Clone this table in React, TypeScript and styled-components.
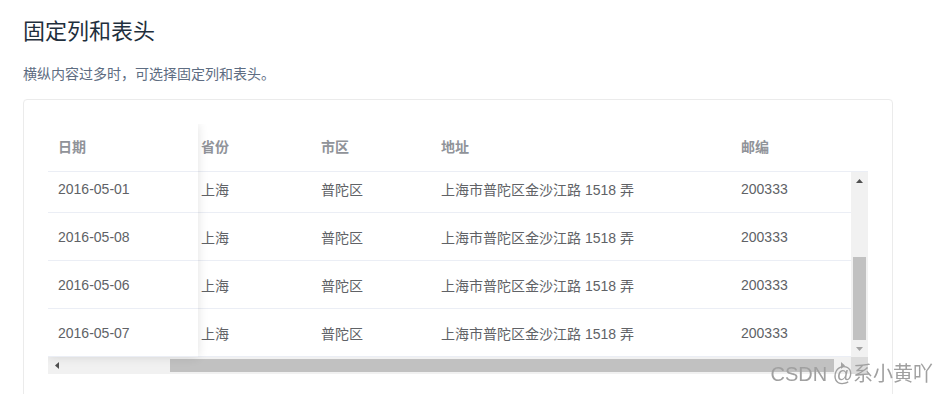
import React from "react";
import styled, { createGlobalStyle } from "styled-components";

const GlobalStyle = createGlobalStyle`
  html, body { margin: 0; padding: 0; background: #fff; }
  body { font-family: "Liberation Sans", "Noto Sans CJK SC", sans-serif; }
  * { box-sizing: border-box; }
`;

const FONT = `"Liberation Sans", "Noto Sans CJK SC", sans-serif`;

type Col = { key: string; label: string; width: number };
const columns: Col[] = [
  { key: "date", label: "日期", width: 150 },
  { key: "name", label: "姓名", width: 120 },
  { key: "province", label: "省份", width: 120 },
  { key: "city", label: "市区", width: 120 },
  { key: "address", label: "地址", width: 300 },
  { key: "zip", label: "邮编", width: 120 },
];

const dates = ["2016-05-03", "2016-05-02", "2016-05-04", "2016-05-01", "2016-05-08", "2016-05-06", "2016-05-07"];
const rows = dates.map((d) => ({
  date: d,
  name: "王小虎",
  province: "上海",
  city: "普陀区",
  address: "上海市普陀区金沙江路 1518 弄",
  zip: "200333",
})) as Record<string, string>[];

const ROW_H = 48;
const HEAD_H = 48;
const BODY_VIEW_H = 185;
const BODY_VIEW_W = 803;
const SB = 17;
const CONTENT_W = columns.reduce((s, c) => s + c.width, 0);
const CONTENT_H = rows.length * ROW_H;
const SCROLL_X = CONTENT_W - BODY_VIEW_W;
const SCROLL_Y = CONTENT_H - BODY_VIEW_H;

const Page = styled.div`
  padding: 15px 0 0 23px;
  font-family: ${FONT};
`;

const Title = styled.h3`
  margin: 0;
  font-size: 22px;
  line-height: 33px;
  font-weight: 400;
  color: #1f2f3d;
`;

const Desc = styled.p`
  margin: 15px 0 0;
  font-size: 14px;
  line-height: 22px;
  color: #5e6d82;
`;

const Card = styled.div`
  margin-top: 14px;
  width: 870px;
  border: 1px solid #ebebeb;
  border-radius: 4px;
  padding: 24px;
`;

const TableWrap = styled.div`
  position: relative;
  width: 820px;
  height: 250px;
  overflow: hidden;
  display: flex;
  flex-direction: column;
  font-size: 14px;
  color: #606266;
`;

const HeaderViewport = styled.div`
  height: ${HEAD_H}px;
  overflow: hidden;
  flex: none;
`;

const Shift = styled.div<{ $dx?: number; $dy?: number }>`
  transform: translate(${(p) => -(p.$dx || 0)}px, ${(p) => -(p.$dy || 0)}px);
`;

const Row = styled.div<{ $head?: boolean }>`
  display: flex;
  height: ${(p) => (p.$head ? HEAD_H : ROW_H)}px;
  border-bottom: 1px solid #ebeef5;
  background: #fff;
`;

const Cell = styled.div<{ $w: number; $head?: boolean }>`
  flex: none;
  width: ${(p) => p.$w}px;
  padding: ${(p) => (p.$head ? "0 10px 4px" : "0 10px")};
  display: flex;
  align-items: center;
  white-space: nowrap;
  font-weight: ${(p) => (p.$head ? 700 : 400)};
  color: ${(p) => (p.$head ? "#909399" : "#606266")};
`;

const Gutter = styled.div`
  flex: none;
  width: ${SB}px;
`;

const BodyArea = styled.div`
  display: flex;
  height: ${BODY_VIEW_H}px;
  flex: none;
`;

const BodyViewport = styled.div`
  width: ${BODY_VIEW_W}px;
  overflow: hidden;
`;

const VBar = styled.div`
  width: ${SB}px;
  background: #f1f1f1;
  display: flex;
  flex-direction: column;
`;

const HBar = styled.div`
  flex: 1;
  background: #f1f1f1;
  display: flex;
`;

const HArea = styled.div`
  display: flex;
  height: ${SB}px;
  flex: none;
`;

const Corner = styled.div`
  width: ${SB}px;
  background: #dcdcdc;
`;

const ArrowBtn = styled.div`
  flex: none;
  width: ${SB}px;
  height: ${SB}px;
  display: flex;
  align-items: center;
  justify-content: center;
`;

const Track = styled.div<{ $vertical?: boolean }>`
  flex: 1;
  display: flex;
  flex-direction: ${(p) => (p.$vertical ? "column" : "row")};
  justify-content: flex-end;
`;

const VThumb = styled.div`
  margin: 0 2px;
  background: #c1c1c1;
`;

const HThumb = styled.div`
  margin: 2px 0;
  background: #c1c1c1;
`;

const FixedCol = styled.div`
  position: absolute;
  left: 0;
  top: 0;
  width: 150px;
  bottom: ${SB}px;
  background: #fff;
  box-shadow: 0 0 10px rgba(0, 0, 0, 0.12);
  display: flex;
  flex-direction: column;
`;

const FixedBody = styled.div`
  height: ${BODY_VIEW_H}px;
  overflow: hidden;
`;

const Watermark = styled.div`
  position: fixed;
  right: 17px;
  top: 364px;
  font-family: "Liberation Sans", "Noto Sans CJK SC", sans-serif;
  font-size: 20px;
  line-height: 20px;
  color: #a0a0a0;
  white-space: nowrap;
`;

const Arrow: React.FC<{ dir: "up" | "down" | "left" | "right"; disabled?: boolean }> = ({ dir, disabled }) => {
  const pts = {
    up: "0,4 7,4 3.5,0",
    down: "0,0 7,0 3.5,4",
    left: "4,0 4,7 0,3.5",
    right: "0,0 0,7 4,3.5",
  }[dir];
  const vert = dir === "up" || dir === "down";
  return (
    <svg width={vert ? 7 : 4} height={vert ? 4 : 7} viewBox={vert ? "0 0 7 4" : "0 0 4 7"}>
      <polygon points={pts} fill={disabled ? "#a3a3a3" : "#505050"} />
    </svg>
  );
};

const vTrack = BODY_VIEW_H - 2 * SB;
const vThumb = Math.round((vTrack * BODY_VIEW_H) / CONTENT_H);
const hTrack = BODY_VIEW_W - 2 * SB;
const hThumb = Math.round((hTrack * BODY_VIEW_W) / CONTENT_W);

export default function App() {
  return (
    <>
      <GlobalStyle />
      <Page>
        <Title>固定列和表头</Title>
        <Desc>横纵内容过多时，可选择固定列和表头。</Desc>
        <Card>
          <TableWrap>
            <HeaderViewport>
              <Shift $dx={SCROLL_X}>
                <Row $head style={{ width: CONTENT_W + SB }}>
                  {columns.map((c) => (
                    <Cell key={c.key} $w={c.width} $head>
                      {c.label}
                    </Cell>
                  ))}
                  <Gutter />
                </Row>
              </Shift>
            </HeaderViewport>
            <BodyArea>
              <BodyViewport>
                <Shift $dx={SCROLL_X} $dy={SCROLL_Y}>
                  {rows.map((r, i) => (
                    <Row key={i} style={{ width: CONTENT_W }}>
                      {columns.map((c) => (
                        <Cell key={c.key} $w={c.width}>
                          {r[c.key]}
                        </Cell>
                      ))}
                    </Row>
                  ))}
                </Shift>
              </BodyViewport>
              <VBar>
                <ArrowBtn>
                  <Arrow dir="up" />
                </ArrowBtn>
                <Track $vertical>
                  <VThumb style={{ height: vThumb }} />
                </Track>
                <ArrowBtn>
                  <Arrow dir="down" disabled />
                </ArrowBtn>
              </VBar>
            </BodyArea>
            <HArea>
              <HBar>
                <ArrowBtn>
                  <Arrow dir="left" />
                </ArrowBtn>
                <Track>
                  <HThumb style={{ width: hThumb }} />
                </Track>
                <ArrowBtn>
                  <Arrow dir="right" disabled />
                </ArrowBtn>
              </HBar>
              <Corner />
            </HArea>
            <FixedCol>
              <Row $head>
                <Cell $w={150} $head>
                  日期
                </Cell>
              </Row>
              <FixedBody>
                <Shift $dy={SCROLL_Y}>
                  {rows.map((r, i) => (
                    <Row key={i}>
                      <Cell $w={150}>{r.date}</Cell>
                    </Row>
                  ))}
                </Shift>
              </FixedBody>
            </FixedCol>
          </TableWrap>
        </Card>
      </Page>
      <Watermark>CSDN @系小黄吖</Watermark>
    </>
  );
}
